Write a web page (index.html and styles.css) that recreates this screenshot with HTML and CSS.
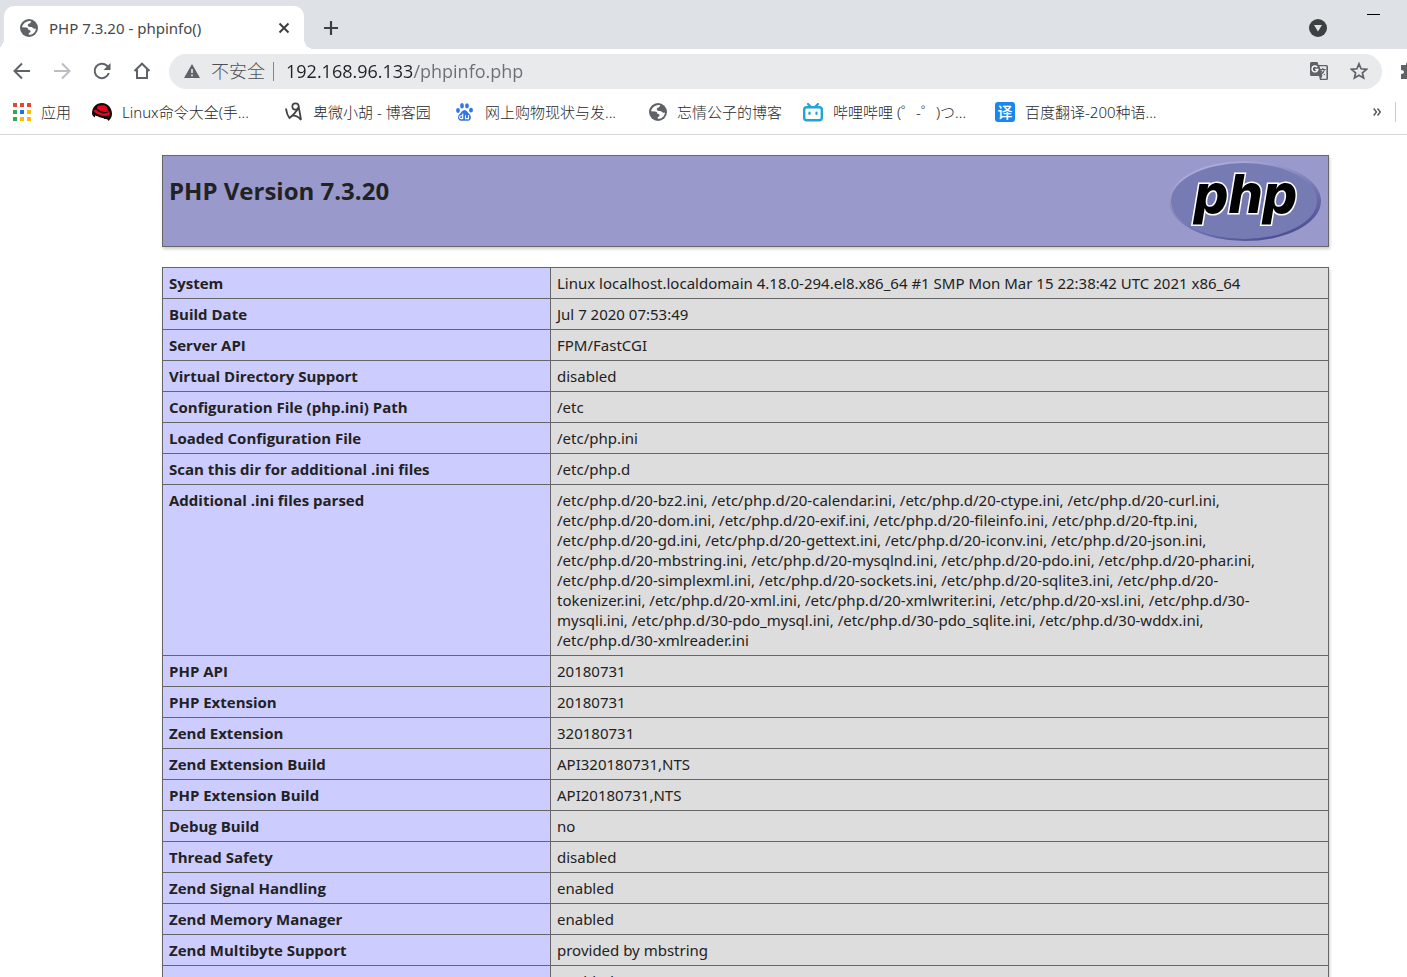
FILE: index.html
```html
<!DOCTYPE html>
<html lang="zh-CN">
<head>
<meta charset="utf-8">
<title>PHP 7.3.20 - phpinfo()</title>
<link rel="stylesheet" href="styles.css">
</head>
<body>
<svg class="defs" aria-hidden="true">
  <symbol id="globe" viewBox="0 0 18 18">
    <circle cx="9" cy="9" r="9" fill="#5f6368"/>
    <path d="M10.500 2C6 2 2.800 4.500 2 8.300l4 .2c1.600 0 2.200.8 2.300 2.200 1.600.1 2.300.6 2.200 1.800-.1 1-.7 1.400-1.700 1.400v1.900c3.700 0 7-2.600 7.200-6.400-1 .7-2 .5-2.700-.2-.8-.9-1.600-1.100-3-1.200-1.700-.1-2.500-.8-2.500-1.800 0-1.200.8-1.700 2.100-1.700.2-.9.800-1.300 1.500-1.500z" fill="#fff"/>
  </symbol>
</svg>
<div class="browser">
  <div class="tabstrip">
    <div class="tab">
      <svg class="icon18"><use href="#globe"/></svg>
      <span class="tab-title">PHP 7.3.20 - phpinfo()</span>
      <button class="plain" aria-label="关闭"><svg width="12" height="12" viewBox="0 0 12 12"><path d="M1.500 1.500l9 9M10.500 1.500l-9 9" stroke="#3c4043" stroke-width="2"/></svg></button>
    </div>
    <button class="plain new-tab" aria-label="新标签页"><svg width="16" height="16" viewBox="0 0 16 16"><path d="M8 1v14M1 8h14" stroke="#3c4043" stroke-width="2.200"/></svg></button>
    <div class="window-tools">
      <button class="plain" aria-label="搜索标签页"><svg width="18" height="18" viewBox="0 0 18 18"><circle cx="9" cy="9" r="9" fill="#3c4043"/><path d="M5 6h8L9 12.500z" fill="#dee1e6"/></svg></button>
      <button class="plain minimize" aria-label="最小化"><svg width="13" height="1"><path d="M0 .5h13" stroke="#000"/></svg></button>
    </div>
  </div>

  <div class="toolbar">
    <div class="nav">
      <button class="plain" aria-label="后退"><svg width="18" height="18" viewBox="0 0 18 18"><path d="M17 9H2M9 1.500L1.500 9 9 16.500" fill="none" stroke="#5f6368" stroke-width="2"/></svg></button>
      <button class="plain" aria-label="前进"><svg width="18" height="18" viewBox="0 0 18 18"><path d="M1 9h15M9 1.500L16.500 9 9 16.500" fill="none" stroke="#bcbec1" stroke-width="2"/></svg></button>
      <button class="plain" aria-label="重新加载"><svg width="18" height="18" viewBox="0 0 18 18"><path d="M15.800 11A7.200 7.200 0 1 1 14 3.800L16 6" fill="none" stroke="#5f6368" stroke-width="2"/><path d="M17.500 1v7h-7z" fill="#5f6368"/></svg></button>
      <button class="plain" aria-label="主页"><svg width="18" height="18" viewBox="0 0 18 18"><path d="M1.500 9L9 1.700 16.500 9M4 7.500V16h10V7.500" fill="none" stroke="#5f6368" stroke-width="2"/></svg></button>
    </div>
    <div class="omnibox">
      <svg width="16" height="14" viewBox="0 0 16 14"><path d="M8 0l8 14H0z" fill="#5f6368"/><path d="M8 5v4M8 10.500v1.700" stroke="#e9eaec" stroke-width="1.600"/></svg>
      <span class="insecure">不安全</span>
      <input class="url" type="text" aria-label="地址" value="192.168.96.133/phpinfo.php">
      <button class="plain" aria-label="翻译"><svg width="18" height="18" viewBox="0 0 18 18"><path d="M1.500 0h6l1 3H16.500a1.500 1.500 0 0 1 1.500 1.500v12a1.500 1.500 0 0 1-1.500 1.500H10l-1-4H1.500A1.500 1.500 0 0 1 0 12.500v-11A1.500 1.500 0 0 1 1.500 0z" fill="#5f6368"/><path d="M9.500 4.300h6.900v12.400h-5.400l1.400-2.800z" fill="#e9eaec"/><path d="M7.300 5.200A2.900 2.900 0 1 0 7.800 7.500H5.200" fill="none" stroke="#fff" stroke-width="1.400"/><path d="M9.800 7.500h6M12.800 6v1.500M14.500 7.500c-.5 2.500-2 4-3.700 5M11 8.500c.8 2 2.500 3.500 4 4.200" fill="none" stroke="#5f6368" stroke-width="1.200"/></svg></button>
      <button class="plain" aria-label="添加书签"><svg width="18" height="18" viewBox="0 0 18 18"><path d="M9 1.800l2.100 5 5.400.5-4.100 3.500 1.200 5.300L9 13.300l-4.600 2.800 1.200-5.300-4.100-3.500 5.400-.5z" fill="none" stroke="#5f6368" stroke-width="1.700"/></svg></button>
    </div>
    <button class="plain extensions" aria-label="扩展程序"><svg width="18" height="18" viewBox="0 0 18 18"><path d="M1 3h5c-.5-4 5.500-4 5 0h4v5c4 0 4 5 0 5v4H1v-5c4 0 4-4 0-4z" fill="#5f6368"/></svg></button>
  </div>

  <nav class="bookmarks">
    <a href="#" class="apps"><svg width="18" height="18" viewBox="0 0 18 18"><path d="M0 0h4v4H0zM7 0h4v4H7zM14 0h4v4h-4z" fill="#ea4335"/><path d="M0 7h4v4H0zM0 14h4v4H0z" fill="#34a853"/><path d="M7 7h4v4H7z" fill="#1a73e8"/><path d="M14 7h4v4h-4zM7 14h4v4H7zM14 14h4v4h-4z" fill="#fbbc04"/></svg>应用</a>
    <a href="#" class="linux"><svg width="20" height="18" viewBox="0 0 20 18"><path d="M0 11C0 4 4 0 10 0s10 5 10 11c0 3-1.500 5-3.500 7-1-2-2-2-4-2C6 16 1 15 0 11z" fill="#17080a"/><path d="M5.500 3.500C6.500 1.500 8 3 10 2.500c3-.6 5 .5 6 5 2 1 2.500 3 1 4.500-3 2.500-11 .5-15-3.500C1.500 7 3 6.500 4.500 7z" fill="#e2061c"/><path d="M5 6.500c3 3 7 4 11 2.500" fill="none" stroke="#17080a" stroke-width="1.300"/><path d="M3 12.500c4 1 5 2.500 9 2.500l-1 1.500 2 1.500H9c0-1-4-1-6-2.500z" fill="#fff"/></svg>Linux命令大全(手...</a>
    <a href="#" class="cnblogs"><svg width="18" height="20" viewBox="0 0 18 20"><circle cx="10.500" cy="4.500" r="3.200" fill="none" stroke="#444" stroke-width="1.700"/><path d="M1 6.500c.5 4 1.500 7 3.500 9.500C8 13.500 11 10 13.700 5.500c1 4 1.600 8 2.300 12.500-2-3-5-4.500-8-4.700" fill="none" stroke="#444" stroke-width="1.800"/></svg>卑微小胡 - 博客园</a>
    <a href="#" class="baidu"><svg width="17" height="18" viewBox="0 0 17 18"><g fill="#3076e8"><ellipse cx="2" cy="7.500" rx="1.900" ry="2.400"/><ellipse cx="6" cy="2.700" rx="1.900" ry="2.700"/><ellipse cx="11" cy="2.800" rx="1.900" ry="2.600"/><ellipse cx="15" cy="7.200" rx="1.900" ry="2.400"/><path d="M8.500 7c2.200 0 3 2.400 4.500 3.700 2.500 2 3 6.500-1 7-2 .2-5 .2-7 0-4-.5-3.500-5-1-7C5.500 9.400 6.300 7 8.500 7z"/></g><path d="M6.700 10.500V16M6.700 12.800H5a1.400 1.400 0 0 0 0 2.800h1.700M9.500 12.300v3.300h3v-3.500" fill="none" stroke="#fff" stroke-width="1.100"/></svg>网上购物现状与发...</a>
    <a href="#" class="blog"><svg class="icon18"><use href="#globe"/></svg>忘情公子的博客</a>
    <a href="#" class="bili"><svg width="20" height="19" viewBox="0 0 20 19"><rect x="1.200" y="4.200" width="17.600" height="13" rx="2.500" fill="none" stroke="#20a5d6" stroke-width="2.400"/><path d="M5 1l3 3M15 1l-3 3M6.500 9.500v1.500M13.500 9.500v1.500" stroke="#20a5d6" stroke-width="2.200" stroke-linecap="round"/></svg>哔哩哔哩 (゜-゜)つ...</a>
    <a href="#" class="fanyi"><span class="yi">译</span>百度翻译-200种语...</a>
    <button class="plain more" aria-label="更多书签"><svg width="8" height="8" viewBox="0 0 8 8"><path d="M.7.5L3.500 4 .7 7.500M4.500.5L7.300 4 4.500 7.500" fill="none" stroke="#505357" stroke-width="1.400"/></svg></button>
    <span class="divider"></span>
  </nav>

  <main class="page">
    <header class="banner">
      <h1>PHP Version 7.3.20</h1>
      <svg class="logo" width="152" height="82" viewBox="0 0 152 82" role="img" aria-label="PHP logo">
        <defs>
          <linearGradient id="rim" x1="0.200" y1="0" x2="0.800" y2="1"><stop offset="0" stop-color="#b4b5e0"/><stop offset=".45" stop-color="#8285bd"/><stop offset="1" stop-color="#45488f"/></linearGradient>
        </defs>
        <ellipse cx="76" cy="41" rx="76" ry="40" fill="url(#rim)"/>
        <ellipse cx="75" cy="41" rx="73" ry="38" fill="#777bb3"/>
        <text x="25" y="53" class="wordmark">php</text>
      </svg>
    </header>
    <table class="info">
      <colgroup><col class="key"><col></colgroup>
      <tbody>
      <tr><th scope="row">System</th><td>Linux localhost.localdomain 4.18.0-294.el8.x86_64 #1 SMP Mon Mar 15 22:38:42 UTC 2021 x86_64</td></tr>
      <tr><th scope="row">Build Date</th><td>Jul 7 2020 07:53:49</td></tr>
      <tr><th scope="row">Server API</th><td>FPM/FastCGI</td></tr>
      <tr><th scope="row">Virtual Directory Support</th><td>disabled</td></tr>
      <tr><th scope="row">Configuration File (php.ini) Path</th><td>/etc</td></tr>
      <tr><th scope="row">Loaded Configuration File</th><td>/etc/php.ini</td></tr>
      <tr><th scope="row">Scan this dir for additional .ini files</th><td>/etc/php.d</td></tr>
      <tr><th scope="row">Additional .ini files parsed</th><td>/etc/php.d/20-bz2.ini, /etc/php.d/20-calendar.ini, /etc/php.d/20-ctype.ini, /etc/php.d/20-curl.ini,<br>/etc/php.d/20-dom.ini, /etc/php.d/20-exif.ini, /etc/php.d/20-fileinfo.ini, /etc/php.d/20-ftp.ini,<br>/etc/php.d/20-gd.ini, /etc/php.d/20-gettext.ini, /etc/php.d/20-iconv.ini, /etc/php.d/20-json.ini,<br>/etc/php.d/20-mbstring.ini, /etc/php.d/20-mysqlnd.ini, /etc/php.d/20-pdo.ini, /etc/php.d/20-phar.ini,<br>/etc/php.d/20-simplexml.ini, /etc/php.d/20-sockets.ini, /etc/php.d/20-sqlite3.ini, /etc/php.d/20-<br>tokenizer.ini, /etc/php.d/20-xml.ini, /etc/php.d/20-xmlwriter.ini, /etc/php.d/20-xsl.ini, /etc/php.d/30-<br>mysqli.ini, /etc/php.d/30-pdo_mysql.ini, /etc/php.d/30-pdo_sqlite.ini, /etc/php.d/30-wddx.ini,<br>/etc/php.d/30-xmlreader.ini</td></tr>
      <tr><th scope="row">PHP API</th><td>20180731</td></tr>
      <tr><th scope="row">PHP Extension</th><td>20180731</td></tr>
      <tr><th scope="row">Zend Extension</th><td>320180731</td></tr>
      <tr><th scope="row">Zend Extension Build</th><td>API320180731,NTS</td></tr>
      <tr><th scope="row">PHP Extension Build</th><td>API20180731,NTS</td></tr>
      <tr><th scope="row">Debug Build</th><td>no</td></tr>
      <tr><th scope="row">Thread Safety</th><td>disabled</td></tr>
      <tr><th scope="row">Zend Signal Handling</th><td>enabled</td></tr>
      <tr><th scope="row">Zend Memory Manager</th><td>enabled</td></tr>
      <tr><th scope="row">Zend Multibyte Support</th><td>provided by mbstring</td></tr>
      <tr><th scope="row">IPv6 Support</th><td>enabled</td></tr>
      </tbody>
    </table>
  </main>
</div>
</body>
</html>
```

FILE: styles.css
```css
* { box-sizing: border-box; }
body {
  margin: 0;
  background: #fff;
  color: #222;
  font-family: "Noto Sans", "Noto Sans CJK SC", sans-serif;
}
.defs { position: absolute; width: 0; height: 0; }
.browser { height: 100vh; overflow: hidden; }
.plain { border: 0; padding: 0; background: none; display: flex; flex: none; }
svg { display: block; flex: none; }
.icon18 { width: 18px; height: 18px; }

.tabstrip {
  display: flex;
  height: 49px;
  padding: 6px 0 0 4px;
  background: #dee1e6;
}
.tab {
  position: relative;
  display: flex;
  align-items: center;
  width: 300px;
  padding: 0 14px 0 16px;
  background: #fff;
  border-radius: 10px 10px 0 0;
}
.tab::before,
.tab::after {
  content: "";
  position: absolute;
  bottom: 0;
  width: 10px;
  height: 10px;
}
.tab::before { right: 100%; background: radial-gradient(circle at 0 0, transparent 10px, #fff 10px); }
.tab::after { left: 100%; background: radial-gradient(circle at 100% 0, transparent 10px, #fff 10px); }
.tab-title { flex: 1; margin-left: 11px; font-size: 15px; color: #45494d; white-space: nowrap; }
.new-tab { align-self: center; margin-left: 19px; }
.window-tools { display: flex; align-items: center; margin-left: auto; padding-right: 27px; gap: 40px; }
.minimize { align-self: flex-start; margin-top: 8px; }

.toolbar {
  display: flex;
  align-items: center;
  height: 45px;
  padding: 0 0 1px 13px;
  overflow: hidden;
}
.nav { display: flex; gap: 22px; margin-right: 18px; }
.omnibox {
  display: flex;
  align-items: center;
  flex: 1;
  min-width: 0;
  height: 35px;
  padding: 0 14px 0 15px;
  border-radius: 18px;
  background: #e9eaec;
}
.omnibox .plain + .plain { margin-left: 22px; }
.insecure {
  margin-left: 11px;
  padding-right: 8px;
  border-right: 1px solid #80868b;
  font-size: 18px;
  line-height: 19px;
  font-weight: 300;
  color: #4c5054;
}
.url {
  flex: 1;
  min-width: 0;
  margin-left: 12px;
  padding: 0;
  border: 0;
  font: 18px/26px "Open Sans", sans-serif;
  color: transparent;
  background: linear-gradient(90deg, #202124 126px, #6b6f74 126px);
  -webkit-background-clip: text;
  background-clip: text;
}
.extensions { margin: 0 -11px 0 18px; }

.bookmarks {
  display: flex;
  align-items: center;
  height: 41px;
  padding: 0 11px 4px 13px;
  border-bottom: 1px solid #d5d6d8;
  font-size: 15px;
  line-height: 20px;
}
.bookmarks a {
  display: flex;
  align-items: center;
  flex: none;
  gap: 10px;
  color: #26292c;
  font-weight: 300;
  text-decoration: none;
  white-space: nowrap;
}
.apps { width: 79px; }
.linux { width: 193px; }
.cnblogs { width: 171px; }
.bookmarks .baidu { width: 193px; gap: 12px; }
.blog { width: 154px; }
.bili { width: 192px; }
.yi {
  width: 20px;
  height: 20px;
  border-radius: 3px;
  background: #1a87f0;
  color: #fff;
  text-align: center;
  font-weight: 500;
}
.more { margin-left: auto; margin-right: 14px; }
.divider { width: 1px; height: 20px; background: #c8cacd; }

.page { padding: 20px 78px 0 162px; }
.banner {
  display: flex;
  justify-content: space-between;
  align-items: flex-start;
  height: 92px;
  padding: 4px 7px 4px 6px;
  border: 1px solid #666;
  background: #9999cc;
  box-shadow: 1px 2px 3px #ccc;
}
.banner h1 { margin: 14px 0 0; font: 700 24px/34px "Open Sans", sans-serif; }
.wordmark {
  font: italic 800 54px Inter, "DejaVu Sans", sans-serif;
  fill: #000;
  stroke: #fff;
  stroke-width: 3px;
  paint-order: stroke;
}
.info {
  width: 100%;
  margin-top: 20px;
  border-collapse: collapse;
  table-layout: fixed;
  box-shadow: 1px 2px 3px #ccc;
  font-size: 15px;
  line-height: 20px;
}
.key { width: 388px; }
.info th, .info td {
  padding: 5px 6px;
  border: 1px solid #666;
  text-align: left;
  vertical-align: top;
}
.info th { background: #ccccff; font-family: "Open Sans", sans-serif; font-weight: 700; }
.info td { background: #ddd; }
```
